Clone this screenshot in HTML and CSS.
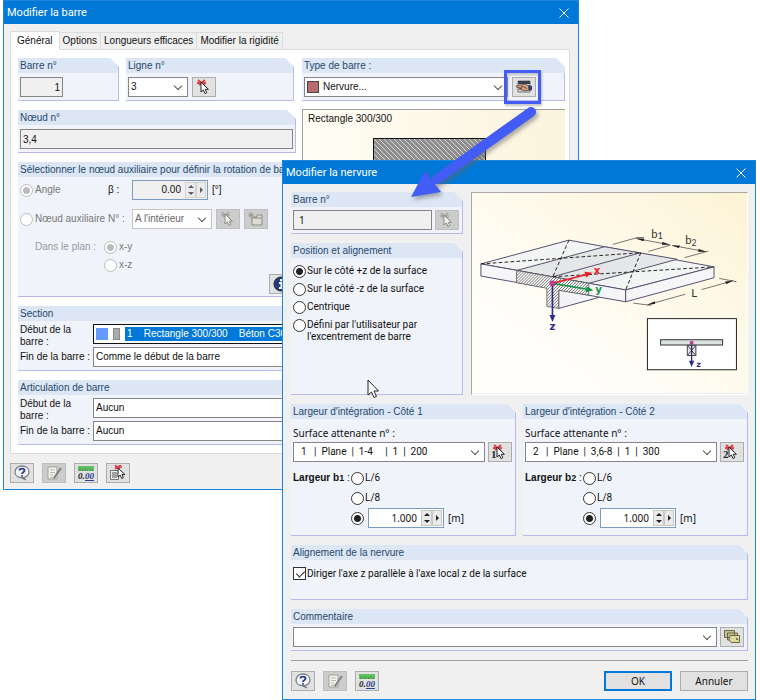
FILE: index.html
```html
<!DOCTYPE html>
<html lang="fr">
<head>
    <meta charset="UTF-8">
    <meta name="viewport" content="width=device-width, initial-scale=1.0">
    <title>Modifier la barre</title>
    <link rel="stylesheet" href="styles.css">
</head>
<body>
    <!-- shared icons -->
    <svg class="defs" width="0" height="0">
        <defs>
            <pattern id="hatch" width="9" height="9" patternUnits="userSpaceOnUse">
                <path d="M-2 11 L11 -2 M-2 2 L2 -2 M7 11 L11 7" stroke="#222" stroke-width="2" />
            </pattern>
            <pattern id="concrete" width="5" height="5" patternUnits="userSpaceOnUse">
                <rect width="5" height="5" fill="#8e8e8e" />
                <path d="M-1 -1 L6 6 M-1 4 L1 6 M4 -1 L6 1" stroke="#d6d6d6" stroke-width="1" />
            </pattern>
            <linearGradient id="cream" x1="0" y1="1" x2="1" y2="0">
                <stop offset="0.25" stop-color="#fffefa" />
                <stop offset="1" stop-color="#fdf3d6" />
            </linearGradient>
            <marker id="tick" viewBox="0 0 12 8" refX="12" refY="4" markerWidth="24" markerHeight="9" markerUnits="userSpaceOnUse" orient="auto-start-reverse" preserveAspectRatio="none">
                <path d="M0 0 L12 4 L0 8z" fill="#222" stroke="none" />
            </marker>
            <symbol id="i-pick" viewBox="0 0 18 16">
                <path d="M3 1l7 6M4 6l6-5M2 4h9" stroke="#d8434b" stroke-width="2" />
                <path d="M6 3v10l2.300-2 1.700 3.500 1.800-.9-1.600-3.300h3.200z" fill="#fff" stroke="#222" />
            </symbol>
            <symbol id="i-pick-off" viewBox="0 0 18 16">
                <path d="M3 1l7 6M4 6l6-5M2 4h9" stroke="#a3a39f" stroke-width="1.500" />
                <path d="M6 3v10l2.300-2 1.700 3.500 1.800-.9-1.600-3.300h3.200z" fill="#f3f3ee" stroke="#8b8b83" />
            </symbol>
            <symbol id="i-folder" viewBox="0 0 18 16">
                <path d="M5 6h5V4h5v10H5z" fill="#ddddd6" stroke="#8b8b83" />
                <path d="M5.500 7h9" stroke="#8b8b83" />
                <path d="M1 4h6M4 1v6M2 2l4 4M6 2L2 6" stroke="#96968e" stroke-width=".8" />
            </symbol>
            <symbol id="i-hand" viewBox="0 0 18 16">
                <path d="M3 2h12v11H3z" fill="#d7dce4" stroke="#777" />
                <path d="M3 2h12v3H3z" fill="#39414f" />
                <path d="M1 7l4-1 5-1 4 2v4l-4 1-3-1-3-1 3-1-5-.5z" fill="#cfa283" stroke="#60412f" stroke-width=".8" />
                <path d="M6 7.500l4 .5 2 2" stroke="#60412f" stroke-width=".8" />
                <path d="M13 6l4 1v4l-3 1z" fill="#35445f" />
            </symbol>
            <symbol id="i-help" viewBox="0 0 18 16">
                <path d="M9 1c4 0 7 2.400 7 6 0 3.400-3 5.500-6 5.700L13 15l-5-2.300C4.500 12.500 2 10 2 7c0-3.600 3-6 7-6z" fill="#f4f5f8" stroke="#7a7e84" stroke-width="1.300" />
                <path d="M6.500 5.500C6.500 3 11.500 3 11.500 5.500c0 1.700-2.500 1.700-2.500 3.500M9 10.300v1.500" stroke="#2c3d8c" stroke-width="1.900" fill="none" />
            </symbol>
            <symbol id="i-edit" viewBox="0 0 18 16">
                <path d="M3 2h9v12H3z" fill="#f4f4ef" stroke="#a0a09a" />
                <path d="M5 5h5M5 7.500h5M5 10h3M5 12.300h4" stroke="#b8b8b2" />
                <path d="M16 3L10 11.500 9 13.500" stroke="#81817b" stroke-width="2" fill="none" />
            </symbol>
            <symbol id="i-units" viewBox="0 0 18 16">
                <path d="M1 1h16v5H1z" fill="#5fc161" />
                <path d="M3 3v3M5.500 4v2M8 3v3M10.500 4v2M13 3v3M15.500 4v2" stroke="#35803a" stroke-width=".7" />
                <text class="i-text" x="1" y="14">0.</text>
                <text class="i-text i-blue" x="8" y="14">00</text>
                <path d="M8 15.500h9" stroke="#2a3f8d" />
            </symbol>
            <symbol id="i-list-pick" viewBox="0 0 18 16">
                <path d="M1.500 5.500h8v9h-8z" fill="#efefef" stroke="#777" />
                <path d="M3 8h5M3 10h5M3 12h5" stroke="#555" />
                <path d="M6 0l5 4M12 0L6 4M6 2h7" stroke="#d8434b" stroke-width="1.600" />
                <path d="M9 3v9l2.200-1.800 1.600 3.300 1.600-.8-1.500-3.100h3.100z" fill="#fff" stroke="#222" />
            </symbol>
            <symbol id="i-cards" viewBox="0 0 18 16">
                <path d="M1.500 1.500h10v7h-10zM4.500 4h10v7h-10z" fill="#c9c08c" stroke="#68684f" />
                <path d="M7 6.500h9.500v7H8L6 11z" fill="#e0d99f" stroke="#68684f" />
                <circle cx="14" cy="10" r="1" fill="#555" />
            </symbol>
            <symbol id="i-info" viewBox="0 0 18 16">
                <circle cx="9" cy="8" r="7" fill="#2a3b80" stroke="#1b2139" />
                <path d="M9 3v2.200M7 7h2.500v5M7 12h5" stroke="#fff" stroke-width="2" fill="none" />
            </symbol>
        </defs>
    </svg>

    <main class="desktop">
        <section class="window window-bar">
            <header class="titlebar">
                <h1>Modifier la barre</h1>
                <button class="close" type="button" aria-label="Fermer"><svg viewBox="0 0 10 10"><path d="M.5.500l9 9M9.500.500l-9 9" /></svg></button>
            </header>
            <form class="bar-body">
                <nav class="tabs">
                    <button type="button" class="tab active">Général</button>
                    <button type="button" class="tab">Options</button>
                    <button type="button" class="tab">Longueurs efficaces</button>
                    <button type="button" class="tab">Modifier la rigidité</button>
                </nav>
                <div class="page">
                    <div class="columns">
                        <div class="col-left">
                            <div class="pair">
                                <div class="group group-no">
                                    <label class="head" for="bar-no">Barre n°</label>
                                    <div class="line"><input class="field right short" id="bar-no" value="1" readonly></div>
                                </div>
                                <div class="group grow">
                                    <label class="head" for="line-no">Ligne n°</label>
                                    <div class="line">
                                        <span class="select narrow"><select id="line-no"><option>3</option></select></span>
                                        <button class="icon" type="button" aria-label="Choisir la ligne"><svg><use href="#i-pick" /></svg></button>
                                    </div>
                                </div>
                            </div>
                            <div class="group">
                                <label class="head" for="node-no">Nœud n°</label>
                                <div class="line"><input class="field grow" id="node-no" value="3,4" readonly></div>
                            </div>
                            <div class="group rotation">
                                <h2 class="head">Sélectionner le nœud auxiliaire pour définir la rotation de barre</h2>
                                <div class="rows">
                                    <div class="line">
                                        <label class="opt muted aux"><input type="radio" name="rot" checked disabled>Angle</label>
                                        <label class="sym" for="beta">β :</label>
                                        <span class="spin off"><input id="beta" value="0.00" readonly><i class="updown"></i><i class="next"></i></span>
                                        <span>[°]</span>
                                    </div>
                                    <div class="line">
                                        <label class="opt muted aux"><input type="radio" name="rot" disabled>Nœud auxiliaire</label>
                                        <label class="sym muted" for="aux-no">N° :</label>
                                        <span class="select off node"><select id="aux-no" disabled><option>A l'intérieur</option></select></span>
                                        <button class="icon off" type="button" disabled aria-label="Choisir le nœud"><svg><use href="#i-pick-off" /></svg></button>
                                        <button class="icon off" type="button" disabled aria-label="Nouveau nœud"><svg><use href="#i-folder" /></svg></button>
                                    </div>
                                    <div class="line plane">
                                        <span class="plane-label">Dans le plan :</span>
                                        <div>
                                            <label class="opt muted"><input type="radio" name="plane" checked disabled>x-y</label>
                                            <label class="opt muted"><input type="radio" name="plane" disabled>x-z</label>
                                        </div>
                                    </div>
                                </div>
                                <button class="icon info" type="button" aria-label="Informations"><svg><use href="#i-info" /></svg></button>
                            </div>
                        </div>
                        <div class="col-right">
                            <div class="group">
                                <label class="head" for="bar-type">Type de barre :</label>
                                <div class="line">
                                    <span class="select type"><b class="swatch"></b><select id="bar-type"><option>Nervure...</option></select></span>
                                    <span class="marked"><button class="icon" type="button" aria-label="Modifier la nervure"><svg><use href="#i-hand" /></svg></button></span>
                                </div>
                            </div>
                            <div class="preview">
                                <p>Rectangle 300/300</p>
                                <svg viewBox="0 0 113 113"><rect x=".5" y=".5" width="112" height="112" fill="url(#concrete)" stroke="#111" /></svg>
                            </div>
                        </div>
                    </div>
                    <div class="group ends">
                        <h2 class="head">Section</h2>
                        <div class="end first">
                            <label for="sec-start">Début de la barre :</label>
                            <span class="select focus"><b class="swatch blue"></b><b class="swatch grey"></b><select id="sec-start"><option>1 &nbsp; &nbsp;Rectangle 300/300 &nbsp; &nbsp;Béton C30/37</option></select></span>
                        </div>
                        <div class="end">
                            <label for="sec-end">Fin de la barre :</label>
                            <span class="select"><select id="sec-end"><option>Comme le début de la barre</option></select></span>
                        </div>
                    </div>
                    <div class="group ends">
                        <h2 class="head">Articulation de barre</h2>
                        <div class="end first">
                            <label for="art-start">Début de la barre :</label>
                            <span class="select"><select id="art-start"><option>Aucun</option></select></span>
                        </div>
                        <div class="end">
                            <label for="art-end">Fin de la barre :</label>
                            <span class="select"><select id="art-end"><option>Aucun</option></select></span>
                        </div>
                    </div>
                </div>
                <footer class="tools">
                    <button class="icon" type="button" aria-label="Aide"><svg><use href="#i-help" /></svg></button>
                    <button class="icon off" type="button" disabled aria-label="Modifier"><svg><use href="#i-edit" /></svg></button>
                    <button class="icon" type="button" aria-label="Unités"><svg><use href="#i-units" /></svg></button>
                    <button class="icon" type="button" aria-label="Choisir dans la liste"><svg><use href="#i-list-pick" /></svg></button>
                </footer>
            </form>
        </section>

        <section class="window window-rib">
            <header class="titlebar">
                <h1>Modifier la nervure</h1>
                <button class="close" type="button" aria-label="Fermer"><svg viewBox="0 0 10 10"><path d="M.5.500l9 9M9.500.500l-9 9" /></svg></button>
            </header>
            <form class="rib-body">
                <div class="rib-top">
                    <div class="rib-left">
                        <div class="group">
                            <label class="head" for="rib-bar">Barre n°</label>
                            <div class="line">
                                <input class="field grow" id="rib-bar" value="1" readonly>
                                <button class="icon off" type="button" disabled aria-label="Choisir la barre"><svg><use href="#i-pick-off" /></svg></button>
                            </div>
                        </div>
                        <div class="group grow">
                            <h2 class="head">Position et alignement</h2>
                            <div class="choices">
                                <label class="opt"><input type="radio" name="pos" checked>Sur le côté +z de la surface</label>
                                <label class="opt"><input type="radio" name="pos">Sur le côté -z de la surface</label>
                                <label class="opt"><input type="radio" name="pos">Centrique</label>
                                <label class="opt tall"><input type="radio" name="pos"><span>Défini par l'utilisateur par<br>l'excentrement de barre</span></label>
                            </div>
                        </div>
                    </div>
                    <div class="diagram">
                        <svg viewBox="18 36 834 606" fill="none" stroke="#55516e" stroke-width="3">
                            <rect x="18" y="36" width="834" height="606" fill="url(#cream)" stroke="none" />
                            <path d="M281 330V386L405 352L390 340" fill="#f4f4f6" />
                            <path d="M45 251L312 179L752 260L484 330z" fill="#f3f4f4" />
                            <path d="M153 271L420 199L640 237L372 310z" fill="#e4e6e7" />
                            <path d="M45 251V288L484 366V330z" fill="#f6f6f8" />
                            <path d="M484 330V366L752 293V260z" fill="#f6f6f8" />
                            <path d="M263 290L530 217" />
                            <path d="M153 271V308L245 325V380L281 386V331L372 346V310z" fill="#fff" stroke="none" />
                            <path d="M153 271V308L245 325V380L281 386V331L372 346V310z" fill="url(#hatch)" stroke="#444" stroke-width="2" />
                            <path d="M45 251L530 217M263 290L752 260M312 179L263 290M530 217L484 330" stroke="#222" stroke-dasharray="11 7" />
                            <g stroke="#333" stroke-width="2">
                                <path d="M445 192L520 171H540M553 213L620 194M663 232L735 212M507 370L562 377M768 295L820 305" />
                                <path d="M516 174L618 193" marker-start="url(#tick)" marker-end="url(#tick)" />
                                <path d="M624 195L728 214" marker-start="url(#tick)" marker-end="url(#tick)" />
                                <path d="M550 375L665 343" marker-start="url(#tick)" />
                                <path d="M714 329L810 302" marker-end="url(#tick)" />
                            </g>
                            <path d="M262 310L365 283" stroke="#ed1c24" stroke-width="5" />
                            <path d="M383 278L359 275L364 292z" fill="#ed1c24" stroke="none" />
                            <path d="M262 310L368 328" stroke="#109648" stroke-width="5" />
                            <path d="M386 331L366 319L363 337z" fill="#109648" stroke="none" />
                            <path d="M262 310V410" stroke="#2e2b88" stroke-width="5" />
                            <path d="M262 427L253 406H271z" fill="#2e2b88" stroke="none" />
                            <circle cx="262" cy="310" r="9" fill="#b83d8e" stroke="none" />
                            <rect x="550" y="417" width="270" height="155" fill="#fff" stroke="#222" />
                            <rect x="590" y="481" width="188" height="16" fill="#dce2e0" stroke="#333" />
                            <path d="M671 498h26v31h-26zM671 498l26 31M697 498l-26 31" fill="#e6e6e6" stroke="#444" />
                            <path d="M684 490V548" stroke="#2e2b88" stroke-width="4" />
                            <path d="M684 564L676 545H692z" fill="#2e2b88" stroke="none" />
                            <circle cx="684" cy="490" r="6" fill="#b83d8e" stroke="none" />
                            <g stroke="none" class="axis">
                                <text x="387" y="282" fill="#ed1c24">x</text>
                                <text x="392" y="340" fill="#109648">y</text>
                                <text x="253" y="450" fill="#2e2b88">z</text>
                                <text x="698" y="563" fill="#2e2b88" class="axis-small">z</text>
                            </g>
                            <g stroke="none" fill="#333" class="dim">
                                <text x="562" y="171">b<tspan class="dim-sub" dy="5">1</tspan></text>
                                <text x="665" y="191">b<tspan class="dim-sub" dy="5">2</tspan></text>
                                <text x="683" y="350">L</text>
                            </g>
                        </svg>
                    </div>
                </div>

                <div class="sides">
                    <div class="group grow">
                        <h2 class="head">Largeur d'intégration - Côté 1</h2>
                        <label class="above" for="surf-1">Surface attenante n° :</label>
                        <div class="line">
                            <span class="select surface"><select id="surf-1"><option>&nbsp; 1 &nbsp; | &nbsp;Plane &nbsp;| &nbsp;1-4 &nbsp; &nbsp; | &nbsp;1 &nbsp;| &nbsp;200</option></select></span>
                            <button class="icon" type="button" aria-label="Choisir la surface 1"><svg><use href="#i-pick" /><text class="badge" x="0" y="14">1</text></svg></button>
                        </div>
                        <div class="width-row">
                            <span class="width-label"><b>Largeur b<small>1</small></b> :</span>
                            <div>
                                <label class="opt"><input type="radio" name="w1">L/6</label>
                                <label class="opt"><input type="radio" name="w1">L/8</label>
                                <div class="value">
                                    <input type="radio" name="w1" aria-label="Valeur" checked>
                                    <span class="spin"><input aria-label="Largeur b1" value="1.000"><i class="updown"></i><i class="next"></i></span>
                                    <span>[m]</span>
                                </div>
                            </div>
                        </div>
                    </div>
                    <div class="group grow">
                        <h2 class="head">Largeur d'intégration - Côté 2</h2>
                        <label class="above" for="surf-2">Surface attenante n° :</label>
                        <div class="line">
                            <span class="select surface"><select id="surf-2"><option>&nbsp; 2 &nbsp; | &nbsp;Plane &nbsp;| &nbsp;3,6-8 &nbsp;| &nbsp;1 &nbsp;| &nbsp;300</option></select></span>
                            <button class="icon" type="button" aria-label="Choisir la surface 2"><svg><use href="#i-pick" /><text class="badge" x="0" y="14">2</text></svg></button>
                        </div>
                        <div class="width-row">
                            <span class="width-label"><b>Largeur b<small>2</small></b> :</span>
                            <div>
                                <label class="opt"><input type="radio" name="w2">L/6</label>
                                <label class="opt"><input type="radio" name="w2">L/8</label>
                                <div class="value">
                                    <input type="radio" name="w2" aria-label="Valeur" checked>
                                    <span class="spin"><input aria-label="Largeur b2" value="1.000"><i class="updown"></i><i class="next"></i></span>
                                    <span>[m]</span>
                                </div>
                            </div>
                        </div>
                    </div>
                </div>

                <div class="group align">
                    <h2 class="head">Alignement de la nervure</h2>
                    <label class="opt"><input type="checkbox" checked>Diriger l'axe z parallèle à l'axe local z de la surface</label>
                </div>

                <div class="group">
                    <label class="head" for="comment">Commentaire</label>
                    <div class="line">
                        <span class="select surface"><select id="comment"><option></option></select></span>
                        <button class="icon" type="button" aria-label="Commentaires"><svg><use href="#i-cards" /></svg></button>
                    </div>
                </div>

                <footer class="tools actions">
                    <button class="icon" type="button" aria-label="Aide"><svg><use href="#i-help" /></svg></button>
                    <button class="icon off" type="button" disabled aria-label="Modifier"><svg><use href="#i-edit" /></svg></button>
                    <button class="icon" type="button" aria-label="Unités"><svg><use href="#i-units" /></svg></button>
                    <button class="btn default" type="submit">OK</button>
                    <button class="btn" type="button">Annuler</button>
                </footer>
            </form>
        </section>

        <svg class="arrow" viewBox="0 0 140 100">
            <path d="M126 12L32 79" stroke="#425cf5" stroke-width="10" stroke-linecap="round" />
            <path d="M6 97L20 71L36 92z" fill="#425cf5" />
        </svg>
        <svg class="cursor" viewBox="0 0 12 20">
            <path d="M1 1v15l3.500-3 2.500 5.500 2.500-1-2.500-5.500h4.500z" fill="#fff" stroke="#222" />
        </svg>
    </main>
</body>
</html>
```

FILE: styles.css
```css
* {
    box-sizing: border-box;
}

body {
    margin: 0;
    background-color: white;
    color: #111;
    font-family: "Liberation Sans", Arial, sans-serif;
    font-size: 10px;
    line-height: 12px;
}

h1, h2, p {
    margin: 0;
    font-weight: normal;
}

input, select, button {
    font: inherit;
    color: inherit;
    margin: 0;
}

.defs {
    position: absolute;
}

.desktop {
    position: relative;
    min-height: 700px;
    overflow: hidden;
}

/* windows */
.window {
    position: absolute;
    background-color: #f0f0f0;
    border: 1px solid #1c86dc;
}

.window-bar {
    left: 3px;
    top: 0;
    width: 576px;
}

.window-rib {
    left: 282px;
    top: 160px;
    width: 474px;
    font-family: "Noto Sans", sans-serif;
}

.titlebar {
    display: flex;
    justify-content: space-between;
    align-items: center;
    height: 23px;
    padding: 0 9px 0 3px;
    background-color: #0078d7;
    color: white;
}

.titlebar h1 {
    font-family: Roboto, sans-serif;
    font-size: 11px;
}

.close {
    display: flex;
    padding: 0;
    border: 0;
    background: none;
}

.close svg {
    width: 10px;
    height: 10px;
    stroke: white;
}

.bar-body {
    padding: 7px 8px 6px 6px;
}

/* tabs */
.tabs {
    display: flex;
    align-items: flex-end;
}

.tab {
    position: relative;
    height: 17px;
    padding: 0 3px;
    border: 1px solid #dcdcdc;
    border-left: 0;
    border-bottom: 0;
    background-color: #f0f0f0;
}

.tab.active {
    height: 19px;
    padding: 0 6px;
    margin-bottom: -1px;
    border-left: 1px solid #dcdcdc;
    background-color: white;
    z-index: 1;
}

.page {
    display: flex;
    flex-direction: column;
    gap: 9px;
    padding: 8px 4px 8px 7px;
    border: 1px solid #dcdcdc;
    background-color: white;
}

.columns {
    display: flex;
    gap: 6px;
}

.col-left {
    display: flex;
    flex-direction: column;
    gap: 9px;
    width: 278px;
}

.col-right {
    display: flex;
    flex-direction: column;
    gap: 8px;
    flex: 1;
}

.pair {
    display: flex;
    gap: 7px;
    padding-right: 2px;
}

.group-no {
    width: 101px;
}

.grow {
    flex: 1;
}

/* groups with a cut corner */
.group {
    min-width: 0;
    background-color: #f0f4fa;
    border-right: 1px solid #b9b9f0;
    border-bottom: 1px solid #b9b9f0;
    clip-path: polygon(0 0, calc(100% - 9px) 0, 100% 9px, 100% 100%, 0 100%);
}

.head {
    display: block;
    height: 15px;
    padding: 0 2px;
    overflow: hidden;
    background-color: #dce6f5;
    color: #27486b;
    font-family: "Liberation Sans", Arial, sans-serif;
    font-size: 10px;
    line-height: 15px;
    white-space: nowrap;
}

.line {
    display: flex;
    align-items: center;
    gap: 4px;
    padding: 4px 2px 3px;
}

.field {
    min-width: 0;
    height: 20px;
    padding: 0 2px;
    border: 1px solid #858585;
    background-color: #f0f0f0;
}

.window-rib .field {
    padding: 0 5px;
}

.short {
    width: 43px;
}

.right {
    text-align: right;
}

.select {
    position: relative;
    display: flex;
    align-items: center;
    height: 20px;
    border: 1px solid #858585;
    background-color: white;
}

.select select {
    flex: 1;
    min-width: 0;
    height: 18px;
    padding: 0 16px 0 2px;
    border: 0;
    appearance: none;
    background: none;
}

.select::after {
    content: "";
    position: absolute;
    right: 6px;
    top: 5px;
    width: 5px;
    height: 5px;
    border: solid #555;
    border-width: 0 1px 1px 0;
    transform: rotate(45deg);
}

.select.off {
    border-color: #c4c4c4;
    color: #666;
}

.select.off select {
    opacity: 1;
}

.narrow {
    width: 60px;
}

.node {
    width: 80px;
}

.type {
    width: 204px;
}

.surface {
    flex: 1;
    font-family: Roboto, sans-serif;
}

.swatch {
    width: 12px;
    height: 12px;
    margin: 0 2px;
    border: 1px solid #444;
    background-color: #b96a6c;
}

.swatch.blue {
    margin-right: 0;
    border: 0;
    background-color: #6499ff;
}

.swatch.grey {
    width: 7px;
    margin: 0 5px;
    border-color: #888;
    background-color: #aaa;
}

.focus {
    border-color: #111;
}

.focus select {
    height: 14px;
    margin-right: 1px;
    background-color: #0078d7;
    color: white;
}

.icon {
    display: flex;
    flex: none;
    justify-content: center;
    align-items: center;
    width: 24px;
    height: 20px;
    padding: 0;
    border: 1px solid #adadad;
    background-color: #e1e1e1;
}

.icon.off {
    border-color: #bfbfbf;
    background-color: #cccccc;
}

.icon svg {
    width: 18px;
    height: 16px;
    fill: none;
}

.i-text {
    fill: #222;
    stroke: none;
    font-family: "Liberation Serif", serif;
    font-size: 9px;
    font-style: italic;
    font-weight: bold;
}

.i-blue {
    fill: #2a3f8d;
}

.badge {
    fill: #222;
    font-family: "Liberation Serif", serif;
    font-size: 11px;
    font-weight: bold;
}

.marked {
    position: relative;
}

.marked::after {
    content: "";
    position: absolute;
    inset: -7px -5px -7px -8px;
    border: 3px solid #425cf5;
    filter: drop-shadow(1px 2px 1px #8888);
}

.col-right .group {
    clip-path: none;
    background: linear-gradient(#f0f4fa, #f0f4fa) 0 15px / 100% 100% no-repeat;
    border-right: 0;
}

.col-right .head {
    clip-path: polygon(0 0, calc(100% - 9px) 0, 100% 9px, 100% 100%, 0 100%);
}

.col-right .line {
    border-right: 1px solid #b9b9f0;
}

.preview {
    flex: 1;
    padding: 3px 14px 3px 5px;
    border: 1px solid #a0a0a0;
    border-right: 0;
    background: linear-gradient(to right, #fffdf5, #fbf3dc);
}

.preview svg {
    display: block;
    width: 113px;
    margin: 13px auto 0;
}

/* rotation */
.rows {
    display: flex;
    flex-direction: column;
    gap: 9px;
    padding: 3px 2px 0;
}

.rows .line {
    padding: 0;
}

.opt {
    display: flex;
    align-items: center;
    gap: 2px;
    height: 18px;
}

.muted {
    color: #777;
}

.aux {
    width: 84px;
    white-space: nowrap;
}

.sym {
    width: 20px;
}

input[type=radio],
input[type=checkbox] {
    flex: none;
    width: 13px;
    height: 13px;
    border: 1px solid #333;
    appearance: none;
    background-color: white;
}

input[type=radio] {
    border-radius: 50%;
}

input[type=radio]:checked {
    background: radial-gradient(circle, #222 3px, white 4px);
}

input[type=radio]:disabled {
    border-color: #bbb;
}

input[type=radio]:disabled:checked {
    background: radial-gradient(circle, #bbb 3px, white 4px);
}

input[type=checkbox] {
    position: relative;
}

input[type=checkbox]:checked::after {
    content: "";
    position: absolute;
    left: 4px;
    top: 1px;
    width: 4px;
    height: 7px;
    border: solid #222;
    border-width: 0 1px 1px 0;
    transform: rotate(45deg);
}

.spin {
    display: flex;
    align-items: center;
    width: 76px;
    height: 20px;
    padding-right: 1px;
    border: 1px solid #7a9cc0;
    background-color: white;
}

.spin.off {
    background-color: #f0f0f0;
}

.spin input {
    flex: 1;
    min-width: 0;
    padding: 0 4px;
    border: 0;
    background: none;
    text-align: right;
}

.updown,
.next {
    position: relative;
    width: 11px;
    height: 16px;
    background-color: #eaeaea;
    border: 1px solid #c8c8c8;
}

.next {
    width: 10px;
}

.updown::before,
.updown::after,
.next::after {
    content: "";
    position: absolute;
    left: 2px;
    border: 3px solid transparent;
}

.updown::before {
    top: -1px;
    border-bottom-color: #222;
}

.updown::after {
    bottom: -1px;
    border-top-color: #222;
}

.next::after {
    left: 3px;
    top: 4px;
    border-left-color: #222;
}

.spin.off .updown,
.spin.off .next {
    opacity: 0.7;
}

.plane {
    align-items: flex-start;
}

.plane-label {
    width: 80px;
    padding: 3px 0 0 15px;
    color: #999;
    white-space: nowrap;
}

.info {
    margin: 0 2px 2px auto;
}

/* member ends */
.ends {
    padding-bottom: 3px;
}

.end {
    display: flex;
    align-items: center;
    padding-left: 2px;
    margin-top: 3px;
}

.end.first {
    height: 20px;
}

.end label {
    width: 73px;
}

.end.first label {
    padding: 4px 12px 0 0;
}

.end .select {
    flex: 1;
}

/* bottom buttons */
.tools {
    display: flex;
    gap: 8px;
    padding-top: 9px;
}

.actions {
    padding-top: 10px;
    border-top: 1px solid #a0a0a0;
}

.btn {
    width: 68px;
    height: 20px;
    padding: 0;
    border: 1px solid #adadad;
    background-color: #e1e1e1;
}

.btn.default {
    margin-left: auto;
    border: 2px solid #0078d7;
}

/* rib window */
.rib-body {
    display: flex;
    flex-direction: column;
    gap: 9px;
    padding: 8px 7px 8px 8px;
}

.rib-top {
    display: flex;
    align-items: stretch;
    gap: 8px;
    min-height: 203px;
}

.rib-left {
    display: flex;
    flex-direction: column;
    gap: 9px;
    width: 172px;
}

.rib-body .line {
    padding: 3px 3px 3px 2px;
    gap: 3px;
}

.rib-body .opt {
    gap: 1px;
    font-family: Roboto, sans-serif;
}

.choices {
    padding: 4px 2px;
}

.tall {
    height: 30px;
    align-items: flex-start;
    padding-top: 3px;
}

.diagram {
    flex: 1;
    border: 1px solid #a8a8a8;
    border-right-color: #fff;
    border-bottom-color: #fff;
}

.diagram svg {
    display: block;
    width: 100%;
}

.axis {
    font-family: "DejaVu Sans", sans-serif;
    font-size: 31px;
    font-weight: bold;
}

.axis-small {
    font-size: 24px;
}

.dim {
    font-family: Lato, sans-serif;
    font-size: 34px;
}

.dim-sub {
    font-size: 26px;
}

.sides {
    display: flex;
    gap: 7px;
}

.above {
    display: block;
    padding: 8px 2px 0;
}

.width-row {
    display: flex;
    padding: 3px 2px 7px;
}

.width-label {
    width: 58px;
    padding-top: 4px;
    white-space: nowrap;
    font-family: "Liberation Sans", Arial, sans-serif;
}

.width-label small {
    font-size: 9px;
}

.width-row .opt {
    height: 20px;
}

.value {
    display: flex;
    align-items: center;
    gap: 4px;
    height: 20px;
}

.align {
    min-height: 55px;
}

.align .opt {
    padding: 5px 2px 0;
    height: 22px;
}

/* callout */
.arrow {
    position: absolute;
    left: 405px;
    top: 100px;
    width: 140px;
    height: 100px;
    filter: drop-shadow(2px 3px 2px #6668);
}

.cursor {
    position: absolute;
    left: 367px;
    top: 379px;
    width: 12px;
    height: 20px;
}
```
